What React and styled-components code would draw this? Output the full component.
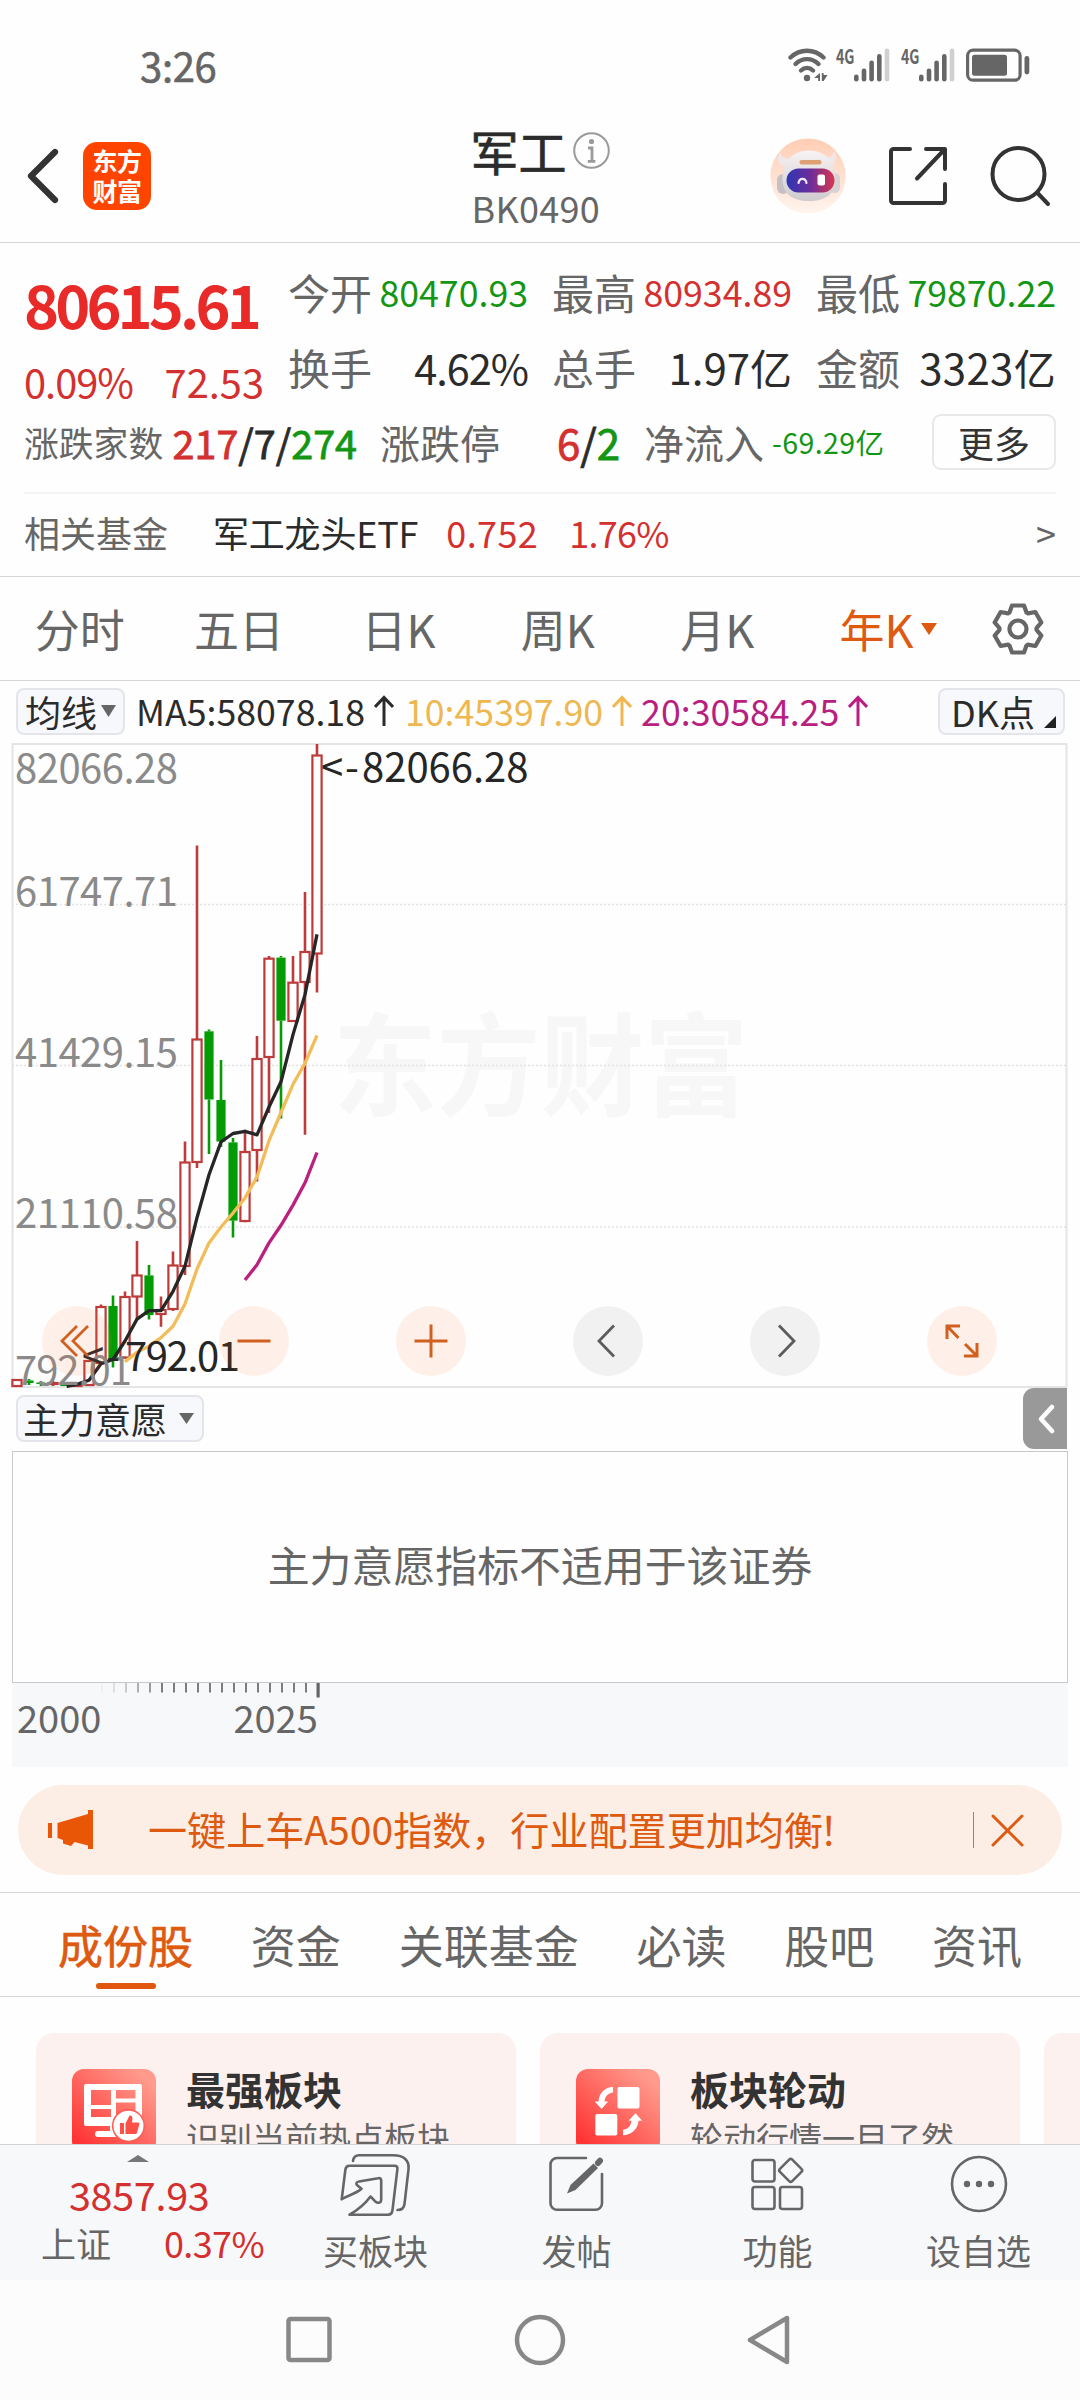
import React from "react";
import styled, { createGlobalStyle } from "styled-components";

const RED = "#d3302f";
const GREEN = "#139613";
const INK = "#2b2b2b";
const GRAY = "#666666";
const ORANGE = "#dd5a10";
const FONT = '"Noto Sans CJK SC", "Noto Sans", sans-serif';

const GlobalStyle = createGlobalStyle`
  * { box-sizing: border-box; }
  body { margin: 0; background: #fefefe; }
  svg { display: block; flex: none; }
`;

const Screen = styled.div`
  width: 1080px;
  height: 2400px;
  overflow: hidden;
  display: flex;
  flex-direction: column;
  background: #fefefe;
  color: ${INK};
  font-family: ${FONT};
  white-space: nowrap;
`;

/* ---------- status bar ---------- */

const StatusBar = styled.header`
  height: 104px;
  flex: none;
  padding: 26px 50px 0 140px;
  display: flex;
  justify-content: space-between;
  align-items: center;
  color: ${GRAY};
`;
const Clock = styled.div`
  font-size: 40px;
  line-height: 76px;
  letter-spacing: -0.3px;
  -webkit-text-stroke: 0.6px currentColor;
`;
const StatusIcons = styled.div`
  display: flex;
  align-items: center;
  gap: 11px;
  & > svg:first-child { margin-right: -3px; }
`;

const Wifi = () => (
  <svg width="40" height="34" viewBox="0 0 40 34" fill="none" stroke={GRAY} strokeWidth="4.4" strokeLinecap="round">
    <path d="M2.500 9.500C12 .5 26 .5 35.500 9.500" />
    <path d="M7.500 16C14 9.500 24 9.500 30.500 16" />
    <path d="M13 22.500c3.500-3.300 8.500-3.300 12 0" />
    <circle cx="19" cy="30" r="3.200" fill={GRAY} stroke="none" />
    <path d="M32 25v8h-1.800v-3H26zM33.800 25v8h1.800l4-6h-4v-2z" fill={GRAY} stroke="none" />
  </svg>
);

const Signal = () => (
  <svg width="54" height="34" viewBox="0 0 54 34" overflow="visible">
    <text x="0" y="15.500" fontSize="20.500" fontWeight="700" fontFamily={FONT} fill={GRAY} textLength="18.500" lengthAdjust="spacingAndGlyphs">4G</text>
    {[[18, 7], [25.700, 13], [33.300, 21], [41, 27.500]].map(([x, h]) => (
      <rect key={x} x={x} y={33.500 - h} width="4.600" height={h} rx="2.300" fill={GRAY} />
    ))}
    <rect x="48.700" y=".5" width="4.600" height="33" rx="2.300" fill="#d0d0d0" />
  </svg>
);

const Battery = () => (
  <svg width="64" height="34" viewBox="0 0 64 34">
    <rect x="1.600" y="2.200" width="52.500" height="30" rx="5.500" fill="none" stroke={GRAY} strokeWidth="3.200" />
    <rect x="6" y="6.800" width="35" height="21" rx="2.500" fill={GRAY} />
    <rect x="58.500" y="8" width="4.800" height="18.500" rx="2.400" fill={GRAY} />
  </svg>
);

/* ---------- title bar ---------- */

const TitleBar = styled.div`
  height: 139px;
  flex: none;
  border-bottom: 1px solid #d6d6d6;
  padding: 0 29px 0 27px;
  display: grid;
  grid-template-columns: 1fr 139px 1fr;
`;
const TitleLeft = styled.div`
  display: flex;
  align-items: center;
  gap: 24px;
  padding-top: 5px;
`;
const AppLogo = styled.div`
  width: 68px;
  height: 68px;
  border-radius: 14px;
  background: #ff4400;
  color: #fff;
  font-size: 25px;
  font-weight: 700;
  text-align: center;
  padding-top: 3px;
`;
const LogoLine = styled.div`
  line-height: 30px;
  letter-spacing: -0.5px;
`;
const TitleCenter = styled.div`
  padding: 18px 0 0 1px;
`;
const TitleName = styled.div`
  display: flex;
  align-items: center;
  gap: 6px;
  font-size: 48px;
  line-height: 56px;
  -webkit-text-stroke: 0.7px currentColor;
`;
const TitleCode = styled.div`
  margin-top: 7px;
  padding-left: 1px;
  font-size: 36px;
  line-height: 44px;
  letter-spacing: 0.3px;
  color: ${GRAY};
`;
const TitleRight = styled.div`
  display: flex;
  align-items: center;
  justify-content: flex-end;
  gap: 42px;
  padding-top: 5px;
`;

const BackIcon = () => (
  <svg width="32" height="58" viewBox="0 0 32 58" fill="none" stroke="#333" strokeWidth="6.200" strokeLinecap="round" strokeLinejoin="round">
    <path d="M28 5 4 29l24 24" />
  </svg>
);
const InfoIcon = () => (
  <svg width="37" height="37" viewBox="0 0 37 37" fill="none" stroke="#9a9a9a" strokeWidth="2">
    <circle cx="18.500" cy="18.500" r="17.300" />
    <circle cx="18.500" cy="9.500" r="2.600" fill="#9a9a9a" stroke="none" />
    <path d="M15 16h4v13M14.800 29.300h7.600" strokeWidth="2.800" />
  </svg>
);
const RobotIcon = () => (
  <svg width="76" height="76" viewBox="0 0 76 76">
    <defs>
      <linearGradient id="halo" x1="0" y1="0" x2="0" y2="1">
        <stop offset="0" stopColor="#ffcdb3" />
        <stop offset="1" stopColor="#fff4ee" />
      </linearGradient>
      <linearGradient id="visor" x1="0" y1="0" x2="1" y2="0">
        <stop offset="0" stopColor="#2f36b4" />
        <stop offset=".5" stopColor="#6d2d9a" />
        <stop offset="1" stopColor="#d9374f" />
      </linearGradient>
      <linearGradient id="shell" x1="0" y1="0" x2="0" y2="1">
        <stop offset="0" stopColor="#f7f3f4" />
        <stop offset="1" stopColor="#cfcacd" />
      </linearGradient>
    </defs>
    <circle cx="38" cy="38" r="37.600" fill="url(#halo)" />
    <path d="M10 14c-4 6-2 14 6 15l6-8c-7 0-11-2-12-7zM64 13c4 6 2 14-5 15l-6-8c6 0 10-2 11-7z" fill="#efe8ea" />
    <rect x="7" y="36" width="12" height="20" rx="6" fill="#c6c0c4" />
    <rect x="59" y="35" width="11" height="20" rx="5.500" fill="#d8d2d6" />
    <path d="M39 12.500c17 0 26.500 12 26.500 28 0 15-9 22.500-26.500 22.500s-26.500-7.500-26.500-22.500c0-16 9.500-28 26.500-28z" fill="url(#shell)" />
    <rect x="29.500" y="22" width="22" height="4.500" rx="2" fill="#dfa173" />
    <rect x="16.500" y="30.500" width="48" height="24" rx="12" fill="url(#visor)" />
    <path d="M28.500 45c1-5.500 7-5.500 8 0" fill="none" stroke="#f2e6ff" strokeWidth="2.200" strokeLinecap="round" />
    <rect x="47.500" y="36.500" width="7.500" height="11" rx="2" fill="#fff" />
  </svg>
);
const ShareIcon = () => (
  <svg width="60" height="60" viewBox="0 0 60 60" fill="none" stroke="#333" strokeWidth="4" strokeLinecap="round" strokeLinejoin="round">
    <path d="M22 3H5.500A2.500 2.500 0 0 0 3 5.500v49A2.500 2.500 0 0 0 5.500 57h49a2.500 2.500 0 0 0 2.500-2.500V38" />
    <path d="M38 3h19v20M56 4 29 32.500" />
  </svg>
);
const SearchIcon = () => (
  <svg width="61" height="62" viewBox="0 0 61 62" fill="none" stroke="#333" strokeWidth="4" strokeLinecap="round">
    <circle cx="28.500" cy="29" r="26" />
    <path d="m47.500 48 10.500 11" />
  </svg>
);

/* ---------- quote panel ---------- */

const QuotePanel = styled.section`
  height: 334px;
  flex: none;
  border-bottom: 1px solid #d6d6d6;
  padding: 11px 24px 0;
`;
const QuoteTop = styled.div`
  display: flex;
  height: 150px;
`;
const PriceBlock = styled.div`
  width: 264px;
`;
const Price = styled.div`
  font-size: 59.500px;
  font-weight: 700;
  line-height: 98px;
  letter-spacing: -3.900px;
  color: #e82a28;
`;
const PriceChange = styled.div`
  display: flex;
  justify-content: space-between;
  width: 240px;
  font-size: 39.800px;
  line-height: 58px;
  color: ${RED};
`;
const ChangePercent = styled.span`
  letter-spacing: -1px;
`;
const StatGrid = styled.div`
  flex: 1;
  display: grid;
  grid-template-columns: repeat(3, 240px);
  grid-auto-rows: 75px;
  column-gap: 24px;
`;
const StatCell = styled.div`
  display: flex;
  align-items: center;
  justify-content: space-between;
  width: ${(p) => p.$width || "auto"};
  margin-right: ${(p) => p.$after || 0}px;
`;
const StatLabel = styled.span`
  font-size: ${(p) => p.$size || 42}px;
  line-height: 60px;
  color: ${GRAY};
`;
const StatValue = styled.span`
  font-size: ${(p) => p.$size || 35.700}px;
  line-height: 60px;
  letter-spacing: ${(p) => p.$track || 0}px;
  -webkit-text-stroke: ${(p) => (p.$strong ? 0.8 : 0)}px;
  margin-left: ${(p) => p.$offset || 0}px;
  color: ${(p) => p.$color || INK};
`;
const Tint = styled.span`
  color: ${(p) => p.$color};
`;
const BreadthRow = styled.div`
  display: flex;
  align-items: center;
  height: 75px;
`;
const MoreButton = styled.button`
  margin-left: auto;
  width: 124px;
  height: 56px;
  padding: 0;
  border: 2px solid #e8e8e8;
  border-radius: 9px;
  background: #fefefe;
  font: 400 36px/48px ${FONT};
  color: #333;
`;
const FundRow = styled.div`
  margin-top: 13px;
  border-top: 2px solid #f4f4f4;
  height: 78px;
  display: flex;
  align-items: center;
  font-size: 36px;
  line-height: 76px;
  color: ${GRAY};
`;
const FundName = styled.span`
  margin: 0 28px 0 45px;
  letter-spacing: -0.2px;
  color: ${INK};
`;
const FundFigure = styled.span`
  margin-right: 31px;
  letter-spacing: ${(p) => p.$track}px;
  color: ${RED};
`;
const FundArrow = styled.span`
  margin-left: auto;
`;

/* ---------- period tabs ---------- */

const PeriodBar = styled.nav`
  height: 104px;
  flex: none;
  display: flex;
  align-items: center;
  border-bottom: 1px solid #d6d6d6;
`;
const PeriodTab = styled.div`
  width: 159.400px;
  display: flex;
  align-items: center;
  justify-content: center;
  font-size: 45px;
  line-height: 102px;
  color: ${(p) => (p.$active ? ORANGE : GRAY)};
  & > svg { margin: 0 -23px 0 7px; }
`;
const SettingsSlot = styled.div`
  flex: 1;
  display: flex;
  justify-content: center;
`;

const Caret = ({ width = 16, height = 12, color = GRAY }) => (
  <svg width={width} height={height} viewBox="0 0 16 12" preserveAspectRatio="none">
    <path d="M0 0h16L8 12z" fill={color} />
  </svg>
);

const toothOutline = () => {
  const base = [[-8.500, -16.500], [-6, -23.500], [6, -23.500], [8.500, -16.500]];
  const pts = [];
  for (let k = 0; k < 6; k++) {
    const a = (k * Math.PI) / 3;
    base.forEach(([x, y]) => {
      pts.push(`${(x * Math.cos(a) - y * Math.sin(a)).toFixed(2)},${(x * Math.sin(a) + y * Math.cos(a)).toFixed(2)}`);
    });
  }
  return pts.join(" ");
};
const GearIcon = () => (
  <svg width="54" height="54" viewBox="-27 -27 54 54" fill="none" stroke={GRAY} strokeWidth="4.200" strokeLinejoin="round">
    <polygon points={toothOutline()} />
    <circle r="8.500" />
  </svg>
);

/* ---------- indicator rows ---------- */

const IndicatorBar = styled.div`
  height: ${(p) => p.$height}px;
  flex: none;
  display: flex;
  align-items: center;
  padding: 0 ${(p) => p.$right}px 2px 16px;
`;
const PickerButton = styled.button`
  width: ${(p) => p.$width}px;
  height: 47px;
  padding: 0 0 0 ${(p) => p.$indent}px;
  display: flex;
  align-items: center;
  gap: ${(p) => p.$gap}px;
  border: 2px solid #e3e5ea;
  border-radius: 8px;
  background: #f7f8fb;
  font: 400 36px/43px ${FONT};
  color: ${INK};
`;
const AverageText = styled.span`
  margin-left: ${(p) => p.$offset}px;
  display: flex;
  align-items: center;
  font-size: 35.700px;
  line-height: 50px;
  color: ${(p) => p.$color};
`;
const DkButton = styled(PickerButton)`
  margin-left: auto;
`;
const UpArrow = () => (
  <svg width="20" height="32" viewBox="0 0 20 32" fill="none" stroke="currentColor" strokeWidth="3">
    <path d="M10 31V3M1 12l9-9.500L19 12" />
  </svg>
);
const ArrowSlot = styled.span`
  margin-left: 9px;
`;
const CornerMark = () => (
  <svg width="12" height="12" viewBox="0 0 12 12"><path d="M12 0v12H0z" fill="#222" /></svg>
);
const CornerSlot = styled.span`
  margin-top: 22px;
`;

/* ---------- candle chart ---------- */

const ChartArea = styled.section`
  position: relative;
  height: 645px;
  flex: none;
`;
const ChartControls = styled.div`
  position: absolute;
  left: 42px;
  bottom: 12px;
  display: flex;
  gap: 107px;
`;
const RoundControl = styled.button`
  width: 70px;
  height: 70px;
  padding: 0;
  border: 0;
  border-radius: 50%;
  display: flex;
  align-items: center;
  justify-content: center;
  background: ${(p) => (p.$muted ? "rgba(0, 0, 0, 0.05)" : "rgba(255, 115, 40, 0.1)")};
`;

/* x step is 12px per year; values are high, body top, body bottom, low */
const CANDLES = [
  ["r", 1380, 1380, 1386, 1386], ["g", 1379, 1380.500, 1383, 1385], ["g", 1381, 1382.500, 1384, 1386],
  ["r", 1381, 1383, 1384, 1386], ["g", 1384, 1384, 1386, 1386], ["r", 1384, 1384.500, 1386, 1387],
  ["r", 1361, 1361, 1385, 1385], ["r", 1304.500, 1307, 1363, 1364], ["g", 1295.600, 1306, 1360.400, 1367.500],
  ["r", 1291.400, 1297, 1357.500, 1358.700], ["r", 1241, 1275.500, 1296.500, 1320], ["g", 1265, 1275.400, 1315, 1319.600],
  ["r", 1296.500, 1310, 1314, 1326.700], ["r", 1251.400, 1265.500, 1309, 1311], ["r", 1141.500, 1162.500, 1266, 1275],
  ["r", 845.600, 1039.500, 1162, 1168], ["g", 1029.600, 1031.300, 1099.500, 1154], ["g", 1060, 1100, 1141.500, 1147],
  ["g", 1138, 1142.400, 1220.600, 1237.500], ["r", 1129.700, 1152, 1221, 1222.300], ["r", 1036, 1059, 1150, 1181.500],
  ["r", 956, 958.700, 1057, 1113], ["g", 956, 957.600, 1020.700, 1118.400], ["r", 956, 982.700, 1021, 1021],
  ["r", 892, 952, 982, 1134.800], ["r", 744, 755.500, 953.500, 992.500],
];
const PLOT = (x, c) => `${x / 3},${(740 + c / 2.376).toFixed(1)}`;
const MA5 = [[200, 1536], [235, 1530], [267, 1521], [303, 1482], [339, 1472], [375, 1428], [411, 1376], [447, 1356], [483, 1356], [519, 1310], [555, 1250], [591, 1135], [627, 1033], [663, 955], [699, 935], [735, 930], [771, 938], [807, 872], [843, 812], [879, 700], [915, 605], [951, 462]];
const MA10 = [[375, 1477], [411, 1455], [447, 1440], [483, 1420], [519, 1393], [555, 1340], [591, 1257], [627, 1195], [663, 1157], [699, 1124], [735, 1088], [771, 1038], [807, 952], [843, 885], [879, 818], [915, 768], [951, 702]];
const MA20 = [[735, 1283], [771, 1247], [807, 1195], [843, 1153], [879, 1105], [915, 1052], [951, 980]];

const Candle = ({ index, kind, high, top, bottom, low }) => {
  const x = 17 + index * 12;
  const color = kind === "r" ? "#bd3b3a" : "#049c04";
  return (
    <g stroke={color} strokeWidth="2.600">
      <path d={`M${x} ${high}V${top}M${x} ${bottom}V${low}`} />
      {kind === "r" ? (
        <rect x={x - 4.600} y={top} width="9.200" height={bottom - top} fill="#fefefe" strokeWidth="2.200" />
      ) : (
        <rect x={x - 4.600} y={top} width="9.200" height={bottom - top} fill={color} strokeWidth="0" />
      )}
    </g>
  );
};

const Series = ({ points, color }) => (
  <polyline points={points.map(([x, c]) => PLOT(x, c)).join(" ")} fill="none" stroke={color} strokeWidth="3.300" strokeLinejoin="round" />
);

const PriceChart = () => (
  <svg width="1080" height="645" viewBox="0 743 1080 645" fontFamily={FONT}>
    <text x="333" y="1108" fontSize="112" fontWeight="700" fill="#f7f7f7" textLength="415" lengthAdjust="spacingAndGlyphs">东方财富</text>
    {[904.500, 1065.500, 1227].map((y) => (
      <path key={y} d={`M12 ${y}H1067`} stroke="#e2e2e2" strokeWidth="1.400" strokeDasharray="2 2" />
    ))}
    <path d="M12.500 744H1066.500V1387H12.500z" fill="none" stroke="#e4e4e4" strokeWidth="2" />
    <g fontSize="40" fill="#8a8a8a">
      <text x="15" y="783" textLength="163">82066.28</text>
      <text x="15" y="906" textLength="163">61747.71</text>
      <text x="15" y="1067" textLength="163">41429.15</text>
      <text x="15" y="1227.500" textLength="163">21110.58</text>
    </g>
    {CANDLES.map(([kind, high, top, bottom, low], i) => (
      <Candle key={i} index={i} kind={kind} high={high} top={top} bottom={bottom} low={low} />
    ))}
    <Series points={MA10} color="#f2bd58" />
    <Series points={MA20} color="#bb1f80" />
    <Series points={MA5} color="#262626" />
    <text x="15" y="1385" fontSize="40" fill="#8a8a8a" textLength="117">792.01</text>
    <g fontSize="40" fill="#262626">
      <text y="782"><tspan x="321">&lt;</tspan><tspan x="345">-</tspan><tspan x="362">82066.28</tspan></text>
      <text y="1371"><tspan x="82">&lt;</tspan><tspan x="106">-</tspan><tspan x="125" textLength="115">792.01</tspan></text>
    </g>
  </svg>
);

const ControlIcon = ({ d, color = "#d0601f", width = 3 }) => (
  <svg width="40" height="40" viewBox="-20 -20 40 40" fill="none" stroke={color} strokeWidth={width}>
    <path d={d} />
  </svg>
);

/* ---------- secondary indicator ---------- */

const DrawerHandle = styled.button`
  margin-left: auto;
  width: 44px;
  height: 61px;
  padding: 0 0 0 3px;
  border: 0;
  border-radius: 11px 0 0 11px;
  background: #999;
  display: flex;
  align-items: center;
  justify-content: center;
`;
const EmptyIndicator = styled.div`
  margin: 0 12px;
  height: 232px;
  flex: none;
  border: 1px solid #c9c9c9;
  display: flex;
  align-items: center;
  justify-content: center;
  padding-bottom: 6px;
  font-size: 41.900px;
  line-height: 60px;
  color: ${GRAY};
`;
const TimeAxis = styled.div`
  margin: 0 12px;
  height: 84px;
  flex: none;
  background: #f7f8fa;
`;
const YearLabels = styled.div`
  display: flex;
  gap: 132px;
  padding-left: 5px;
  font-size: 38px;
  line-height: 48px;
  margin-top: -5px;
  color: ${GRAY};
`;
const TICK_SHADES = ["#f1f1f4", "#dedee0", "#cacacc", "#b0b0b2", "#9a9a9c"];
const TickStrip = () => (
  <svg width="320" height="15" viewBox="0 0 320 15">
    {Array.from({ length: 18 }, (_, i) => (
      <rect key={i} x={89 + i * 12} y="0" width="2" height="9.500" fill={TICK_SHADES[i] || "#7c7c7e"} />
    ))}
    <rect x="304.500" y="0" width="3.200" height="14.500" fill="#666" />
  </svg>
);

/* ---------- promo banner ---------- */

const Banner = styled.aside`
  margin: 18px 18px 17px;
  height: 90px;
  flex: none;
  border-radius: 45px;
  background: #fceee5;
  display: flex;
  align-items: center;
  padding: 0 38px 0 30px;
  color: ${ORANGE};
`;
const BannerText = styled.span`
  margin-left: 54px;
  font-size: 39.100px;
  line-height: 86px;
  padding-bottom: 4px;
`;
const BannerMark = styled.span`
  margin-left: -4px;
`;
const BannerRule = styled.span`
  margin: 0 17px 0 auto;
  width: 1px;
  height: 36px;
  background: #c9763c;
`;

/* ---------- section tabs ---------- */

const SectionBar = styled.nav`
  height: 105px;
  flex: none;
  border-top: 1px solid #d6d6d6;
  border-bottom: 1px solid #d6d6d6;
  display: flex;
  gap: 57.800px;
  padding-left: 58px;
`;
const SectionTab = styled.div`
  height: 96px;
  display: flex;
  flex-direction: column;
  align-items: center;
  justify-content: space-between;
  font-size: 45px;
  line-height: 68px;
  padding-top: 18px;
  -webkit-text-stroke: ${(p) => (p.$active ? 0.6 : 0)}px;
  color: ${(p) => (p.$active ? ORANGE : GRAY)};
`;
const ActiveMark = styled.i`
  width: 60px;
  height: 6px;
  border-radius: 3px;
  background: #e0560c;
`;

/* ---------- cards ---------- */

const CardStrip = styled.section`
  height: 147px;
  flex: none;
  overflow: hidden;
  display: flex;
  gap: 24px;
  padding: 36px 0 0 36px;
`;
const Card = styled.article`
  width: 480px;
  height: 156px;
  flex: none;
  border-radius: 18px;
  background: #fdf1f0;
  padding: 36px 0 0 36px;
  display: flex;
  gap: 30px;
`;
const CardTitle = styled.div`
  font-size: 39px;
  font-weight: 700;
  line-height: 44px;
  margin-top: -3px;
  color: #333;
`;
const CardNote = styled.div`
  margin-top: 2px;
  font-size: 33px;
  line-height: 50px;
  color: ${GRAY};
`;

const CardIconBase = ({ id, children }) => (
  <svg width="84" height="84" viewBox="0 0 84 84">
    <defs>
      <linearGradient id={id} x1=".1" y1=".9" x2=".85" y2=".1">
        <stop offset="0" stopColor="#ff3333" />
        <stop offset="1" stopColor="#ff9a8c" />
      </linearGradient>
    </defs>
    <rect width="84" height="84" rx="12" fill={`url(#${id})`} />
    {children}
  </svg>
);
const StrongIcon = () => (
  <CardIconBase id="strong">
    <path fillRule="evenodd" fill="#fff" d="M14 15h54a2 2 0 0 1 2 2v38a2 2 0 0 1-2 2H14a2 2 0 0 1-2-2V17a2 2 0 0 1 2-2zM19 21v15h20V21zM44 21v8.500h19.500V21zM19 40v8h20v-8zM44 33.500V48h19.500V33.500z" />
    <path d="M32 57h6v5H26a3 3 0 0 0 0 6h18V57z" fill="#fff" />
    <circle cx="56.500" cy="56.700" r="15.800" fill="#fff" stroke="#ff5d55" strokeWidth="1.600" />
    <path d="M48 54h4v11h-4zM53.500 54.500l4-8c3 0 3.500 2 2.500 7h6c1.500 0 1.500 1.500 1 3l-2 7c-.4 1.200-1 1.500-2 1.500h-9.500z" fill="#ff5048" />
  </CardIconBase>
);
const RotateIcon = () => (
  <CardIconBase id="rotate">
    <g fill="#fff">
      <rect x="41.500" y="18" width="22" height="21.500" rx="2" />
      <rect x="19.300" y="45" width="22" height="21.500" rx="2" />
      <path d="M37 18v5.500c-5 .5-8 4-8.500 9h3.700L25.500 40l-6.700-7.500h3.700C23 24 28.500 18.300 37 18z" />
      <path d="M47 66.300v-5.500c5-.5 8-4 8.500-9h-3l7-7.500 6.700 7.500h-3.700C62 60 55.500 66 47 66.300z" />
    </g>
  </CardIconBase>
);

/* ---------- bottom bar ---------- */

const BottomBar = styled.footer`
  height: 136px;
  flex: none;
  border-top: 1px solid #d0d3d8;
  background: #f7f8fa;
  display: flex;
`;
const IndexTicker = styled.div`
  width: 275px;
  padding: 10px 0 0 41px;
`;
const TickerCaret = styled.div`
  padding-left: 86px;
`;
const TickerValue = styled.div`
  padding-left: 28px;
  margin-top: 7px;
  font-size: 39.500px;
  letter-spacing: -0.3px;
  line-height: 50px;
  color: ${RED};
`;
const TickerRow = styled.div`
  display: flex;
  justify-content: space-between;
  width: 223px;
  line-height: 47px;
  font-size: 35px;
  color: ${GRAY};
  & > span:last-child { font-size: 36px; letter-spacing: -0.6px; color: ${RED}; }
`;
const Action = styled.div`
  width: 201px;
  display: flex;
  flex-direction: column;
  align-items: center;
  font-size: 35px;
  line-height: 46px;
  color: ${GRAY};
`;
const ActionIcon = styled.div`
  height: 82px;
  padding-top: ${(p) => p.$top}px;
  svg { fill: none; stroke: ${GRAY}; stroke-width: 2.6px; stroke-linecap: round; stroke-linejoin: round; }
  svg .solid { fill: ${GRAY}; stroke-width: 0; }
  svg .thick { stroke-width: 6px; }
`;

const BuyIcon = () => (
  <svg width="72" height="66" viewBox="0 0 72 66">
    <path d="M13 8c.5-4 2-5.700 6-5.700h34c11 0 16.500 5 15.500 14L64.500 51c-.5 4-2.500 6-7 6" />
    <path d="M1.700 46.300 5.400 16.500c.4-2.800 1.500-3.800 4-3.800h45c2.300 0 3.300 1.200 3 3.500L52.500 57c-.4 3.400-1.600 4.700-4.500 4.700H9.500C16 58 25 51 30.500 43.500l4.500 4.700c3 2.500 6.200 2 6.200-2V27.500c0-2-1-2.700-3-2.300L19 28.500c-3 .6-3.500 2.300-1.500 4l4 3.300C16 41 8 42 1.700 46.300z" />
  </svg>
);
const PostIcon = () => (
  <svg width="57" height="58" viewBox="0 0 57 58">
    <path d="M38 3H9a6.500 6.500 0 0 0-6.500 6.500v38.700A6.500 6.500 0 0 0 9 54.700h38.500a6.500 6.500 0 0 0 6.500-6.500V19" />
    <path className="solid" d="m45.500 8.500 4.500 4.500-22.500 22-8.500 3.500 3.500-8.500z" />
    <path className="thick" d="m50 8 2-2.300" />
  </svg>
);
const GridIcon = () => (
  <svg width="55" height="56" viewBox="0 0 55 56">
    <rect x="2.500" y="4" width="22" height="21.500" rx="2.500" />
    <rect x="2.500" y="31" width="22" height="22" rx="2.500" />
    <rect x="30" y="31" width="22" height="22" rx="2.500" />
    <rect x="32" y="5.700" width="17.400" height="17.400" rx="2.200" transform="rotate(45 40.700 14.400)" />
  </svg>
);
const MoreIcon = () => (
  <svg width="58" height="58" viewBox="0 0 58 58">
    <circle cx="29" cy="29" r="27" />
    {[17, 29, 41].map((x) => <circle key={x} className="solid" cx={x} cy="29" r="3.200" />)}
  </svg>
);

const SystemNav = styled.div`
  height: 120px;
  flex: none;
  background: #fcfcfc;
  display: flex;
  align-items: center;
  justify-content: center;
  gap: 179px;
`;
const NavGlyph = ({ children }) => (
  <svg width="52" height="52" viewBox="0 0 52 52" fill="none" stroke="#888" strokeWidth="4.500" strokeLinejoin="round">
    {children}
  </svg>
);

/* ---------- page ---------- */

const PERIODS = ["分时", "五日", "日K", "周K", "月K", "年K"];
const SECTIONS = ["成份股", "资金", "关联基金", "必读", "股吧", "资讯"];
const STATS = [
  { label: "今开", value: "80470.93", color: GREEN },
  { label: "最高", value: "80934.89", color: RED },
  { label: "最低", value: "79870.22", color: GREEN },
  { label: "换手", value: "4.62%", size: 41.5, track: -1 },
  { label: "总手", value: "1.97亿", size: 42 },
  { label: "金额", value: "3323亿", size: 42, track: 0.3 },
];
const AVERAGES = [
  { text: "MA5:58078.18", color: INK, offset: 11 },
  { text: "10:45397.90", color: "#efb750", offset: 11 },
  { text: "20:30584.25", color: "#b81f80", offset: 9 },
];
const ACTIONS = [
  { label: "买板块", Icon: BuyIcon, top: 8 },
  { label: "发帖", Icon: PostIcon, top: 10 },
  { label: "功能", Icon: GridIcon, top: 11 },
  { label: "设自选", Icon: MoreIcon, top: 10 },
];

export default function App() {
  return (
    <Screen>
      <GlobalStyle />
      <StatusBar>
        <Clock>3:26</Clock>
        <StatusIcons><Wifi /><Signal /><Signal /><Battery /></StatusIcons>
      </StatusBar>

      <TitleBar>
        <TitleLeft>
          <BackIcon />
          <AppLogo><LogoLine>东方</LogoLine><LogoLine>财富</LogoLine></AppLogo>
        </TitleLeft>
        <TitleCenter>
          <TitleName>军工<InfoIcon /></TitleName>
          <TitleCode>BK0490</TitleCode>
        </TitleCenter>
        <TitleRight><RobotIcon /><ShareIcon /><SearchIcon /></TitleRight>
      </TitleBar>

      <QuotePanel>
        <QuoteTop>
          <PriceBlock>
            <Price>80615.61</Price>
            <PriceChange><ChangePercent>0.09%</ChangePercent><span>72.53</span></PriceChange>
          </PriceBlock>
          <StatGrid>
            {STATS.map((s) => (
              <StatCell key={s.label}>
                <StatLabel>{s.label}</StatLabel>
                <StatValue $size={s.size} $color={s.color} $track={s.track}>{s.value}</StatValue>
              </StatCell>
            ))}
          </StatGrid>
        </QuoteTop>
        <BreadthRow>
          <StatCell $width="333px" $after={23}>
            <StatLabel $size={34.8}>涨跌家数</StatLabel>
            <StatValue $size={39.5} $strong>
              <Tint $color={RED}>217</Tint>/7/<Tint $color={GREEN}>274</Tint>
            </StatValue>
          </StatCell>
          <StatCell $width="240px" $after={24}>
            <StatLabel $size={40}>涨跌停</StatLabel>
            <StatValue $size={42} $strong>
              <Tint $color={RED}>6</Tint>/<Tint $color={GREEN}>2</Tint>
            </StatValue>
          </StatCell>
          <StatLabel $size={40}>净流入</StatLabel>
          <StatValue $size={28.5} $color={GREEN} $offset={8} $track={0.4}>-69.29亿</StatValue>
          <MoreButton>更多</MoreButton>
        </BreadthRow>
        <FundRow>
          相关基金
          <FundName>军工龙头ETF</FundName>
          <FundFigure $track={0.4}>0.752</FundFigure>
          <FundFigure $track={-0.7}>1.76%</FundFigure>
          <FundArrow>&gt;</FundArrow>
        </FundRow>
      </QuotePanel>

      <PeriodBar>
        {PERIODS.map((p) => (
          <PeriodTab key={p} $active={p === "年K"}>
            {p}
            {p === "年K" && <Caret color="#dd5a10" />}
          </PeriodTab>
        ))}
        <SettingsSlot><GearIcon /></SettingsSlot>
      </PeriodBar>

      <IndicatorBar $height={62} $right={15}>
        <PickerButton $width={109} $indent={7} $gap={4}>均线<Caret width={15} /></PickerButton>
        {AVERAGES.map((a) => (
          <AverageText key={a.text} $color={a.color} $offset={a.offset}>
            {a.text}<ArrowSlot><UpArrow /></ArrowSlot>
          </AverageText>
        ))}
        <DkButton $width={127} $indent={11} $gap={9}>DK点<CornerSlot><CornerMark /></CornerSlot></DkButton>
      </IndicatorBar>

      <ChartArea>
        <PriceChart />
        <ChartControls>
          <RoundControl><ControlIcon d="M0-15-15 0 0 15M11-15-4 0 11 15" width={2.8} /></RoundControl>
          <RoundControl><ControlIcon d="M-16.500 0h33" /></RoundControl>
          <RoundControl><ControlIcon d="M-16.500 0h33M0-16.500v33" /></RoundControl>
          <RoundControl $muted><ControlIcon d="M6-15.500-9 0 6 15.500" color="#5c5c5c" width={2.8} /></RoundControl>
          <RoundControl $muted><ControlIcon d="M-6-15.500 9 0-6 15.500" color="#5c5c5c" width={2.8} /></RoundControl>
          <RoundControl><ControlIcon d="M-2-15h-13v13M-15-15-3.500-3M2 15h13V2M15 15 3 3" /></RoundControl>
        </ChartControls>
      </ChartArea>

      <IndicatorBar $height={63} $right={13}>
        <PickerButton $width={188} $indent={5} $gap={12}>主力意愿<Caret width={15} height={11} /></PickerButton>
        <DrawerHandle>
          <svg width="20" height="32" viewBox="0 0 20 32" fill="none" stroke="#fff" strokeWidth="4.600" strokeLinecap="round" strokeLinejoin="round">
            <path d="M15 4 4 16l11 12" />
          </svg>
        </DrawerHandle>
      </IndicatorBar>

      <EmptyIndicator>主力意愿指标不适用于该证券</EmptyIndicator>
      <TimeAxis>
        <TickStrip />
        <YearLabels><span>2000</span><span>2025</span></YearLabels>
      </TimeAxis>

      <Banner>
        <svg width="46" height="40" viewBox="0 0 46 40" fill="#e85606">
          <path d="M0 13h4v15H0zM9.500 13 40 4V0h5v39h-5v-3.500L26.500 32 23 36l-8-2.500V30l-5.500-2z" />
        </svg>
        <BannerText>一键上车A500指数，行业配置更加均衡<BannerMark>！</BannerMark></BannerText>
        <BannerRule />
        <svg width="33" height="33" viewBox="0 0 33 33" stroke="#dd5a10" strokeWidth="3" strokeLinecap="round">
          <path d="m2 2 29 29M31 2 2 31" />
        </svg>
      </Banner>

      <SectionBar>
        {SECTIONS.map((s, i) => (
          <SectionTab key={s} $active={i === 0}>
            {s}
            {i === 0 && <ActiveMark />}
          </SectionTab>
        ))}
      </SectionBar>

      <CardStrip>
        <Card>
          <StrongIcon />
          <div>
            <CardTitle>最强板块</CardTitle>
            <CardNote>识别当前热点板块</CardNote>
          </div>
        </Card>
        <Card>
          <RotateIcon />
          <div>
            <CardTitle>板块轮动</CardTitle>
            <CardNote>轮动行情一目了然</CardNote>
          </div>
        </Card>
        <Card />
      </CardStrip>

      <BottomBar>
        <IndexTicker>
          <TickerCaret>
            <svg width="22" height="7" viewBox="0 0 22 7"><path d="M0 7 11 0l11 7z" fill="#777" /></svg>
          </TickerCaret>
          <TickerValue>3857.93</TickerValue>
          <TickerRow><span>上证</span><span>0.37%</span></TickerRow>
        </IndexTicker>
        {ACTIONS.map(({ label, Icon, top }) => (
          <Action key={label}>
            <ActionIcon $top={top}><Icon /></ActionIcon>
            {label}
          </Action>
        ))}
      </BottomBar>

      <SystemNav>
        <NavGlyph><rect x="5.500" y="5" width="41" height="41" rx="2" /></NavGlyph>
        <NavGlyph><circle cx="26" cy="26" r="23" /></NavGlyph>
        <NavGlyph><path d="M42 4v44L5 26z" /></NavGlyph>
      </SystemNav>
    </Screen>
  );
}
